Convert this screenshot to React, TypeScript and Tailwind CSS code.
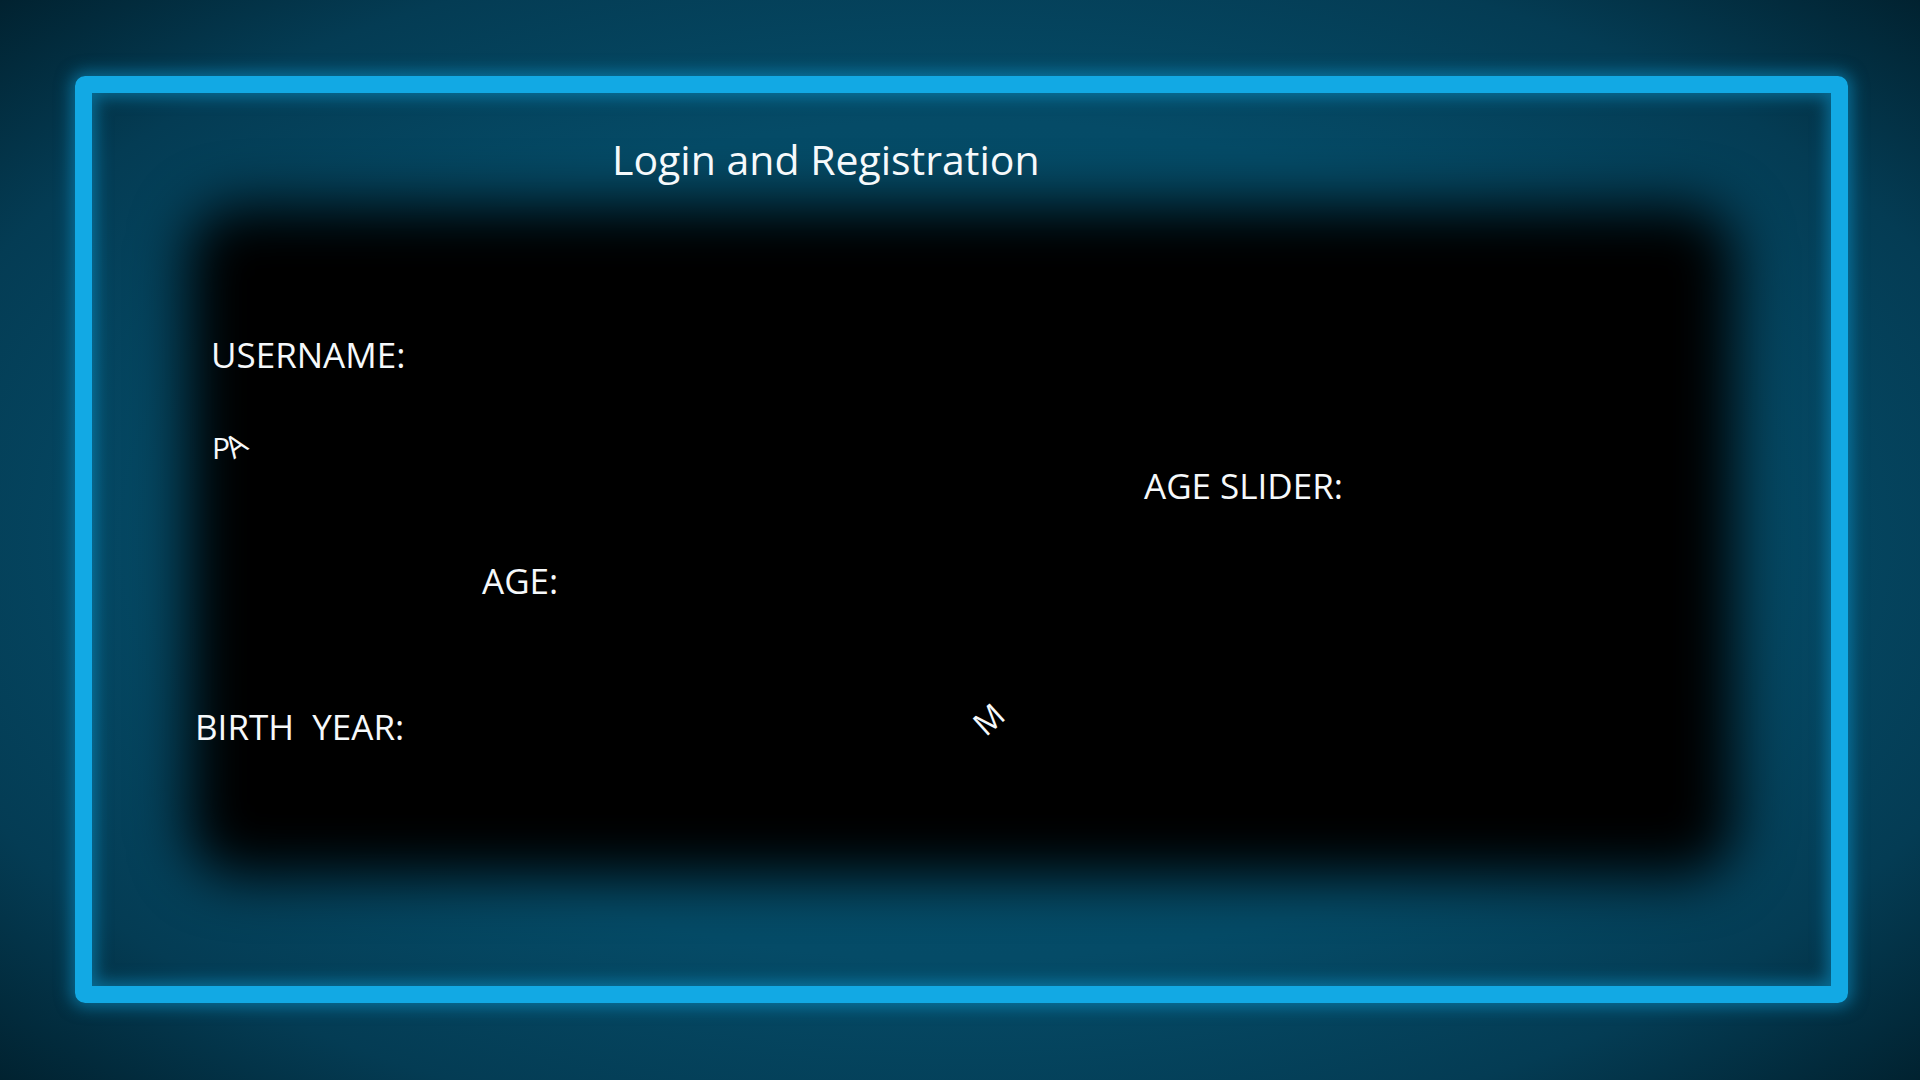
import React from "react"

const font = { fontFamily: '"Open Sans", "Noto Sans", sans-serif' }

function Backdrop() {
  return (
    <>
      {/* neon frame */}
      <div className="absolute left-[75px] top-[76px] w-[1773px] h-[927px] rounded-[10px] border-[17px] border-[#12a9e4] shadow-[0_0_16px_4px_rgba(14,165,225,0.5),inset_0_0_16px_4px_rgba(14,165,225,0.5)]" />
      {/* dark panel with soft edges */}
      <div className="absolute left-[188px] top-[205px] w-[1547px] h-[672px] rounded-[50px] bg-black blur-[28px]" />
    </>
  )
}

export default function App() {
  return (
    <div
      className="relative h-screen w-full overflow-hidden bg-[radial-gradient(ellipse_at_center,#05506c_0%,#054b67_55%,#043c54_80%,#012230_100%)] text-[#f6f9fb]"
      style={font}
    >
      <Backdrop />
      <div className="relative flex flex-col pt-[139px]">
        <h1 className="ml-[612px] text-[41px] leading-none font-normal">Login and Registration</h1>

        <div className="ml-[211px] mt-[157px] text-[35px] leading-none">USERNAME:</div>

        <div className="mt-[61px] flex items-start pl-[212px]">
          <div className="w-[932px] flex items-start text-[30px] leading-none">
            <span>P</span>
            <span className="inline-block -ml-[4px] mt-[-3px] -rotate-[35deg]">A</span>
          </div>
          <div className="mt-[35px] text-[35px] leading-none">AGE SLIDER:</div>
        </div>

        <div className="ml-[482px] mt-[60px] text-[35px] leading-none">AGE:</div>

        <div className="mt-[111px] flex items-start pl-[195px]">
          <div className="w-[779px] text-[35px] leading-none whitespace-pre">BIRTH  YEAR:</div>
          <span className="inline-block mt-[-6px] text-[32px] leading-none -rotate-[42deg]">M</span>
        </div>
      </div>
    </div>
  )
}
